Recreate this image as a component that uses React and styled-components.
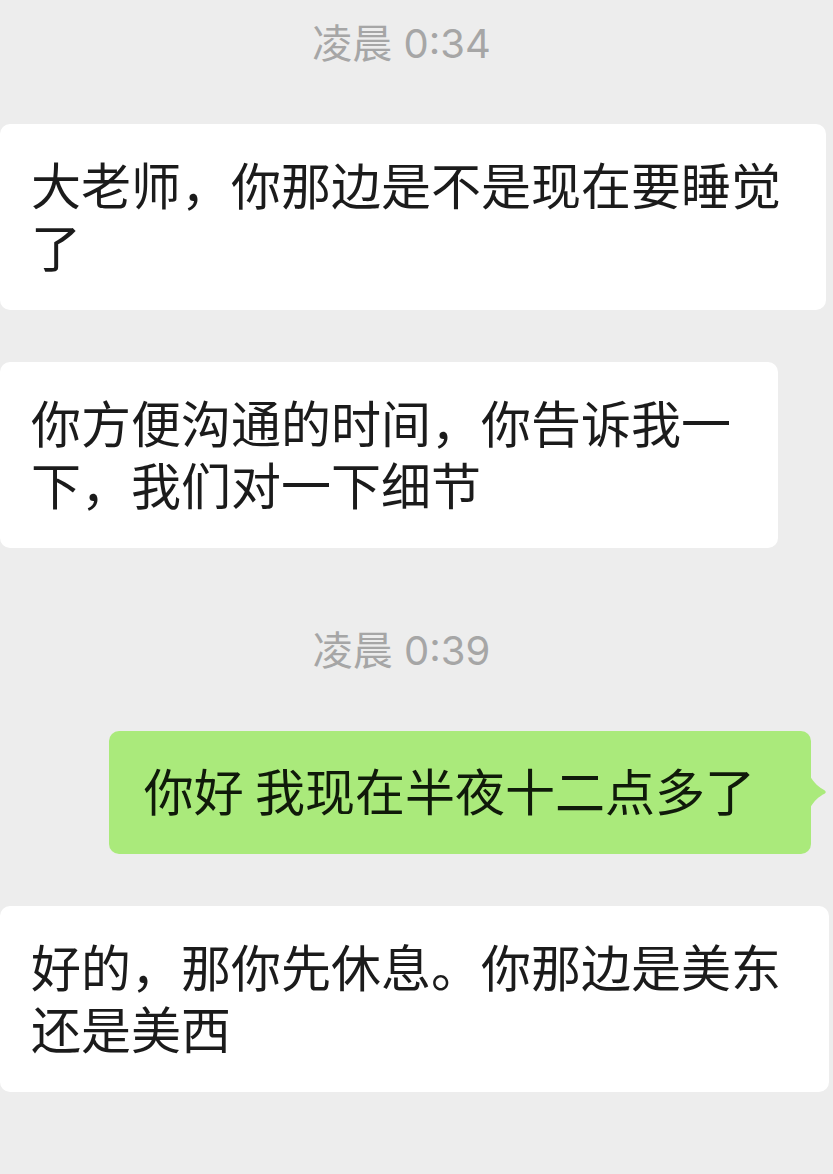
import React from "react";
import styled, { createGlobalStyle } from "styled-components";

const GlobalStyle = createGlobalStyle`
  html, body {
    margin: 0;
    padding: 0;
    background: #ededed;
  }
  body {
    width: 833px;
    height: 1174px;
    overflow: hidden;
    font-family: "Noto Sans CJK SC", "Noto Sans", sans-serif;
  }
`;

const Chat = styled.div`
  display: flex;
  flex-direction: column;
  gap: 52px;
  padding: 19px 0 0;
  width: 833px;
  height: 1174px;
  box-sizing: border-box;
  background: #ededed;
`;

const Time = styled.div`
  box-sizing: border-box;
  text-align: center;
  font-family: "Inter", "Noto Sans CJK SC", sans-serif;
  font-size: 40px;
  line-height: 44px;
  height: 50px;
  padding: 0 30px 6px 0;
  color: #a6a6a6;
  margin-top: ${(p) => (p.$first ? "0" : "26px")};
  margin-bottom: 3px;
  & > span {
    font-family: "Noto Sans CJK SC", sans-serif;
  }
`;

const Row = styled.div`
  display: flex;
  justify-content: ${(p) => (p.$mine ? "flex-end" : "flex-start")};
  padding-right: ${(p) => (p.$mine ? "22px" : "0")};
`;

const Bubble = styled.div`
  position: relative;
  box-sizing: border-box;
  width: ${(p) => (p.$width ? `${p.$width}px` : "auto")};
  padding: 28px 30px 34px 31px;
  background: #ffffff;
  border-radius: 10px;
  font-size: 50px;
  line-height: 62px;
  color: #1b1b1b;
  word-break: break-all;
  line-break: strict;
`;

const MyBubble = styled(Bubble)`
  background: #aaea7b;
  color: #101a0a;
  padding: 27px 56px 34px 35px;
  white-space: nowrap;
`;

const Tail = styled.svg`
  position: absolute;
  right: -16px;
  top: 50%;
  margin-top: -17px;
  width: 17px;
  height: 32px;
`;

export default function App() {
  return (
    <>
      <GlobalStyle />
      <Chat>
        <Time $first>
          <span>凌晨</span> 0:34
        </Time>
        <Row>
          <Bubble $width={826}>大老师，你那边是不是现在要睡觉了</Bubble>
        </Row>
        <Row>
          <Bubble $width={778}>你方便沟通的时间，你告诉我一下，我们对一下细节</Bubble>
        </Row>
        <Time>
          <span>凌晨</span> 0:39
        </Time>
        <Row $mine>
          <MyBubble>
            你好 我现在半夜十二点多了
            <Tail viewBox="0 0 17 32" aria-hidden="true">
              <path
                d="M0 0 C4 7 9 11.5 14.5 14.2 Q17 16 14.5 17.8 C9 20.5 4 25 0 32 Z"
                fill="#aaea7b"
              />
            </Tail>
          </MyBubble>
        </Row>
        <Row>
          <Bubble $width={829}>好的，那你先休息。你那边是美东还是美西</Bubble>
        </Row>
      </Chat>
    </>
  );
}
